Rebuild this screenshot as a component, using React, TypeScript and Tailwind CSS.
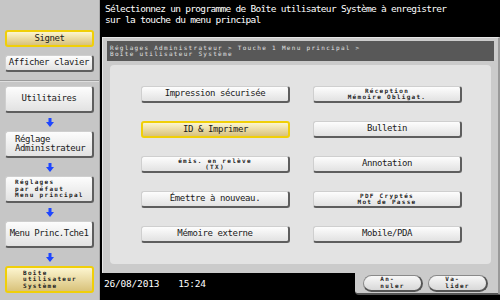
import React from 'react';

const mono = "font-['DejaVu_Sans_Mono','Liberation_Mono',monospace]";

const grayBtn =
  'bg-gradient-to-b from-[#fdfdfd] to-[#e2e2e2] border border-[#cfcfcf] border-r-[2px] border-b-[2px] border-r-[#5e5e5e] border-b-[#5e5e5e] rounded-[3px]';
const yellowBtn =
  'bg-gradient-to-b from-[#fcf5cf] to-[#d9c27a] border-[2px] border-[#f0cf08] rounded-[3px]';

const Arrow = () => (
  <div className="h-[18px] flex items-center justify-center">
    <svg width="8" height="9" viewBox="0 0 8 9">
      <rect x="2.5" y="0" width="3" height="4.5" fill="#1e46ff" />
      <polygon points="0,4 8,4 4,9" fill="#1e46ff" />
    </svg>
  </div>
);

const Tiny = ({ lines, className = '' }: { lines: string[]; className?: string }) => (
  <div className={`${mono} text-[6px] leading-[6.5px] font-bold tracking-[1.3px] text-[#222] ${className}`}>
    {lines.map((l, i) => (
      <div key={i} className="whitespace-pre">
        {l}
      </div>
    ))}
  </div>
);

const MainBtn = ({ label, tiny, active }: { label?: string; tiny?: string[]; active?: boolean }) => (
  <div
    className={`h-[17px] w-[149px] flex items-center justify-center ${active ? yellowBtn : grayBtn}`}
  >
    {tiny ? (
      <Tiny lines={tiny} className="text-center" />
    ) : (
      <span className={`${mono} text-[9px] tracking-[-0.4px] text-[#1a1a1a]`}>{label}</span>
    )}
  </div>
);

export default function App() {
  return (
    <div className="w-[500px] h-[300px] flex bg-black overflow-hidden">
      {/* sidebar */}
      <div className="w-[100px] h-full bg-[#c6c6c6] border-r border-r-[#a9a9a9] flex flex-col">
        <div className="px-[5px] pt-[30px] flex flex-col gap-[8px]">
          <div className={`h-[17px] flex items-center justify-center ${yellowBtn}`}>
            <span className={`${mono} text-[9px] tracking-[-0.4px] text-[#1a1a1a]`}>Signet</span>
          </div>
          <div className={`h-[17px] flex items-center justify-center ${grayBtn}`}>
            <span className={`${mono} text-[9px] tracking-[-0.4px] text-[#1a1a1a]`}>Afficher clavier</span>
          </div>
        </div>
        <div className="mt-[8px] h-[2px] border-t border-t-[#9c9c9c] border-b border-b-[#dedede]" />
        <div className="px-[5px] pt-[4px] flex flex-col">
          <div className={`h-[27px] flex items-center justify-center ${grayBtn}`}>
            <span className={`${mono} text-[9px] tracking-[-0.4px] text-[#1a1a1a]`}>Utilitaires</span>
          </div>
          <Arrow />
          <div className={`h-[27px] flex flex-col justify-center pl-[9px] ${grayBtn}`}>
            <div className={`${mono} text-[9px] leading-[9px] tracking-[-0.4px] text-[#1a1a1a]`}>
              Réglage
              <br />
              Administrateur
            </div>
          </div>
          <Arrow />
          <div className={`h-[27px] flex items-center pl-[9px] ${grayBtn}`}>
            <Tiny lines={['Réglages', 'par défaut', 'Menu principal']} />
          </div>
          <Arrow />
          <div className={`h-[27px] flex items-center justify-center ${grayBtn}`}>
            <span className={`${mono} text-[9px] tracking-[-0.5px] text-[#1a1a1a]`}>Menu Princ.Tche1</span>
          </div>
          <Arrow />
          <div className={`h-[27px] flex items-center pl-[16px] ${yellowBtn}`}>
            <Tiny lines={['Boîte', 'utilisateur', 'Système']} />
          </div>
        </div>
      </div>

      {/* right side */}
      <div className="flex-1 flex flex-col">
        <div
          className={`h-[37px] pl-[5px] pt-[3px] ${mono} text-[9.5px] leading-[11px] tracking-[-0.7px] text-white`}
        >
          <div>Sélectionnez un programme de Boîte utilisateur Système à enregistrer</div>
          <div>sur la touche du menu principal</div>
        </div>

        <div className="ml-[2px] h-[236px] bg-[#cbcbcb] border-t border-l border-t-[#e6e6e6] border-l-[#e6e6e6] border-r-[2px] border-r-[#9a9a9a] flex flex-col">
          <div className="mx-[4px] mt-[3px] h-[20px] bg-[#585858] pl-[3px] flex items-center">
            <Tiny
              lines={['Réglages Administrateur > Touche 1 Menu principal >', 'Boîte utilisateur Système']}
              className="!text-[#e2e2e2] !font-normal"
            />
          </div>
          <div className="mx-[7px] mt-[4px] h-[199px] bg-[#e3e3e3] rounded-[4px] pl-[31px] pt-[21px]">
            <div className="grid grid-cols-[149px_149px] gap-x-[23px] gap-y-[18px]">
              <MainBtn label="Impression sécurisée" />
              <MainBtn tiny={['Réception', 'Mémoire Obligat.']} />
              <MainBtn label="ID & Imprimer" active />
              <MainBtn label="Bulletin" />
              <MainBtn tiny={['émis. en relève', '(TX)']} />
              <MainBtn label="Annotation" />
              <MainBtn label="Émettre à nouveau." />
              <MainBtn tiny={['PDF Cryptés', 'Mot de Passe']} />
              <MainBtn label="Mémoire externe" />
              <MainBtn label="Mobile/PDA" />
            </div>
          </div>
        </div>

        <div className="flex h-[22px]">
          <div
            className={`w-[255px] flex items-center pl-[4px] gap-[19px] ${mono} text-[9.5px] tracking-[-0.2px] text-white`}
          >
            <span>26/08/2013</span>
            <span>15:24</span>
          </div>
          <div className="flex-1 bg-[#cbcbcb] border-r-[2px] border-r-[#9a9a9a] border-b-[2px] border-b-[#555] rounded-bl-[4px] flex items-center pl-[8px] gap-[5px]">
            {[
              ['An-', 'nuler'],
              ['Va-', 'lider'],
            ].map((l, i) => (
              <div
                key={i}
                className="w-[60px] h-[17px] rounded-full bg-gradient-to-b from-[#f8f8f8] to-[#d8d8d8] border border-[#8a8a8a] border-b-[2px] border-r-[2px] border-b-[#555] border-r-[#555] flex items-center justify-center"
              >
                <Tiny lines={l} />
              </div>
            ))}
          </div>
        </div>
      </div>
    </div>
  );
}
